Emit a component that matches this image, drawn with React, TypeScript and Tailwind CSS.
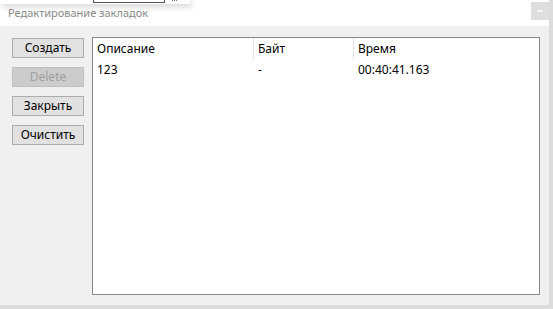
export default function App() {
  const buttons = [
    { label: "Создать", disabled: false },
    { label: "Delete", disabled: true },
    { label: "Закрыть", disabled: false },
    { label: "Очистить", disabled: false },
  ];

  return (
    <div
      className="relative w-[553px] h-[309px] bg-[#dcdcdc] overflow-hidden text-[12px] text-black"
      style={{ fontFamily: '"Noto Sans", "Segoe UI", sans-serif' }}
    >
      {/* window */}
      <div className="w-[549px] h-[305px] flex flex-col bg-[#f0f0f0]">
        {/* title bar */}
        <div className="h-[26px] bg-white flex items-center justify-between pl-2 shrink-0">
          <span className="text-[11px] text-[#8a8a8a] mt-[1px]">Редактирование закладок</span>
          <div className="w-[18px] h-[18px] bg-[#dedede] flex items-center justify-center mt-[-4px]">
            <div className="w-[6px] h-[2px] bg-[#f4f4f4]" />
          </div>
        </div>

        {/* body */}
        <div className="flex flex-1 pt-[12px] pl-3 pr-[9px] pb-[10px] gap-2">
          <div className="flex flex-col gap-[9px] w-[72px]">
            {buttons.map((b) => (
              <div
                key={b.label}
                className={
                  b.disabled
                    ? "h-[20px] flex items-center justify-center border border-[#bfbfbf] bg-[#cccccc] text-[#a0a0a0]"
                    : "h-[20px] flex items-center justify-center border border-[#adadad] bg-[#e1e1e1]"
                }
              >
                {b.label}
              </div>
            ))}
          </div>

          <div className="flex-1 border border-[#828790] bg-white mt-[-1px]">
            <div className="flex h-[21px] items-center">
              <div className="w-[161px] h-full pl-[4px] flex items-center border-r border-[#e5e5e5]">Описание</div>
              <div className="w-[100px] h-full pl-[4px] flex items-center border-r border-[#e5e5e5]">Байт</div>
              <div className="flex-1 pl-[4px] flex items-center">Время</div>
            </div>
            <div className="flex h-[21px] items-center">
              <div className="w-[161px] pl-[4px]">123</div>
              <div className="w-[100px] pl-[4px]">-</div>
              <div className="flex-1 pl-[4px]">00:40:41.163</div>
            </div>
          </div>
        </div>
      </div>

      {/* overlapping popup edge */}
      <div className="absolute left-0 top-0 w-[190px] h-[4px] bg-white shadow-[2px_2px_6px_rgba(0,0,0,0.25)]">
        <div className="absolute left-[93px] top-[-2px] w-[72px] h-[5px] border border-[#555]" />
        <div className="absolute left-[172px] top-0 flex gap-[1px]">
          <div className="w-[1px] h-[1px] bg-[#777]" />
          <div className="w-[1px] h-[1px] bg-[#777]" />
          <div className="w-[1px] h-[1px] bg-[#777]" />
        </div>
      </div>
    </div>
  );
}
